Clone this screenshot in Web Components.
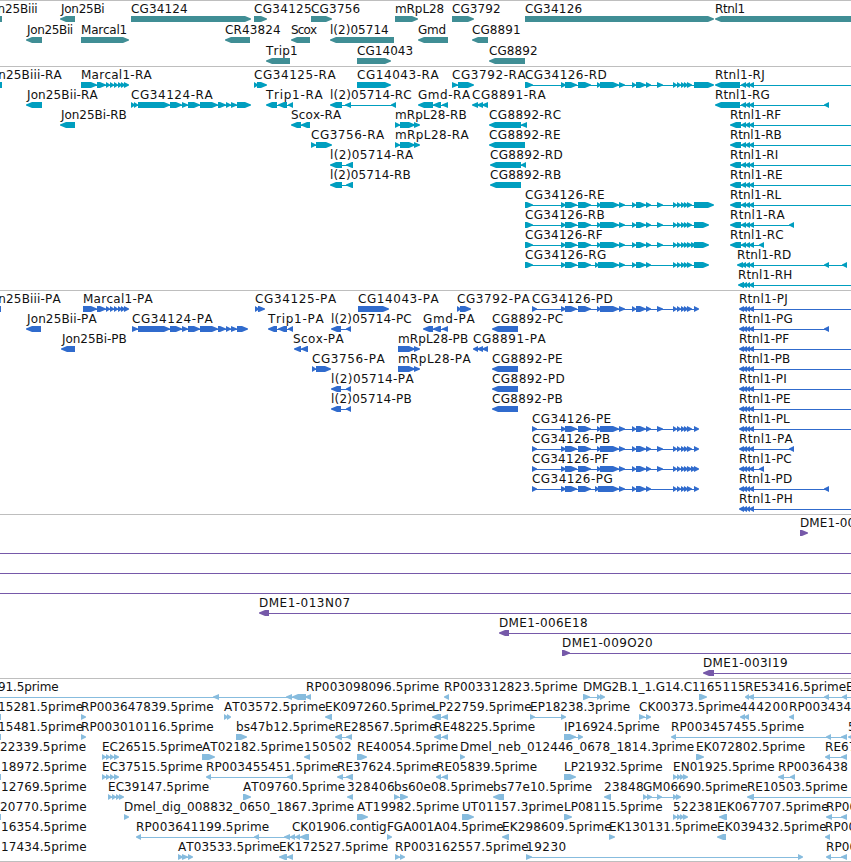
<!DOCTYPE html>
<html lang="en">
<head>
<meta charset="utf-8">
<title>Genome browser</title>
<style>
    body{
        margin: 0;
        background-color: white;
        overflow: hidden;
    }
</style>
</head>
<body>
<genome-browser>
    <genome-track name="genes" color="#408e95" pitch="21" rows="3" pad="2"></genome-track>
    <genome-track name="transcripts" color="#009ebf" pitch="20" rows="11" pad="3"></genome-track>
    <genome-track name="proteins" color="#306bcd" pitch="20" rows="11" pad="3"></genome-track>
    <genome-track name="clones" color="#7659a9" pitch="20" rows="8" pad="3"></genome-track>
    <genome-track name="ests" color="#87bcde" pitch="20" rows="9" pad="2"></genome-track>
</genome-browser>

<script>
// exon lists shared by several isoforms
const CG34124 = "138-170 170-182 182-188 188-200 200-218 218-226 226-231 231-237";
const CG34126 = "561-566 565-577 578-591 597-601 600-619 619-625 632-636 636-646 646-651 657-663 673-677 677-681 681-685 684-688 687-692";
const CG34126F = CG34126 + " 691-696";
const CG34126G = "561-566 565-577 578-591 595-599 598-619 619-625 632-636 636-646 646-651 673-677 677-681 681-685 684-688 687-692";
const MARCAL = "97-106 106-110 110-114 114-118 118-122 121-125 124-129";
const RT3 = "741-746 745-750 749-754";
const RT4 = "739-744 742-747 746-750 749-754";
const QUAD = "673-677 677-681 680-684 683-688";

// one line per feature: row | label | label left | label right | strand | exons | line
// an empty right edge means the label runs off the view
const DATA = {
genes: `
0|Jon25Biii|-13|37|-|-13-2
0|Jon25Bi|61|104|-|60-75
0|CG34124|131|187|+|131-251
0|CG34125|254|311|+|254-267
0|CG3756|311|359.5|+|311-332
0|mRpL28|395|443.5|+|395-418
0|CG3792|452|500|+|452-474
0|CG34126|525|581.5|+|525-714
0|Rtnl1|715|744.5|-|715-870
1|Jon25Bii|27|72.5|-|26-42
1|Marcal1|81|126.5|+|81-129
1|CR43824|225|280|-|225-250
1|Scox|291|316.5|-|291-310
1|l(2)05714|330|388|-|330-394
1|Gmd|418|445.5|-|418-448
1|CG8891|472|520|-|472-488
2|Trip1|266|297|-|266-290
2|CG14043|357|412.5|+|357-391
2|CG8892|489|537|-|489-525`,
transcripts: `
0|Jon25Biii-RA|-13|61|-|-13-2
0|Marcal1-RA|81|151|+|81-97 ${MARCAL}
0|CG34125-RA|254|335|+|254-258 257-267
0|CG14043-RA|357|438|+|357-391
0|CG3792-RA|452|525|+|452-458 458-474
0|CG34126-RD|525|606|+|525-533 ${CG34126} 694-714
0|Rtnl1-RJ|715|764|-|715-740 ${RT3}|860
1|Jon25Bii-RA|27|97|-|26-42
1|CG34124-RA|131|212|+|131-135 134-138 ${CG34124} 237-251
1|Trip1-RA|266|322|-|266-277 278-287 288-293
1|l(2)05714-RC|330|411|-|330-342 345-351 391-396
1|Gmd-RA|418|469.5|-|418-433 433-441 442-448
1|CG8891-RA|472|545|-|472-478 477-483 482-488
1|Rtnl1-RG|715|769|-|715-740 ${RT3} 824-829
2|Jon25Bi-RB|61|126|-|60-75
2|Scox-RA|291|340.5|-|291-301 301-310
2|mRpL28-RB|395|466|+|395-400 400-415 414-420
2|CG8892-RC|489|560.5|-|489-521 521-527
2|Rtnl1-RF|730|780.5|-|730-741 ${RT3}|860
3|CG3756-RA|311|383.5|+|311-316 316-332
3|mRpL28-RA|395|468|+|395-400 400-415 414-420
3|CG8892-RE|489|560|-|489-525
3|Rtnl1-RB|730|781|-|730-741 ${RT3}|860
4|l(2)05714-RA|330|412.5|-|330-342 346-353
4|CG8892-RD|490|562|-|490-521 521-526
4|Rtnl1-RI|730|777.5|-|730-741 ${RT3}|860
5|l(2)05714-RB|330|410|-|330-342 346-353
5|CG8892-RB|490|560.5|-|490-521
5|Rtnl1-RE|730|782|-|730-741 ${RT3}|860
6|CG34126-RE|525|604|+|525-533 ${CG34126} 694-714
6|Rtnl1-RL|730|780.5|-|730-741 ${RT3}|860
7|CG34126-RB|525|604|+|525-533 ${CG34126} 694-709
7|Rtnl1-RA|730|784|-|730-741 ${RT3} 789-794
8|CG34126-RF|525|602|+|525-533 ${CG34126F} 694-709
8|Rtnl1-RC|730|783|-|730-741 ${RT3} 759-764
9|CG34126-RG|525|605.5|+|525-533 ${CG34126G} 694-709
9|Rtnl1-RD|737|790.5|-|737-743 ${RT3} 824-829 842-847
10|Rtnl1-RH|738|791.5|-|738-744 ${RT4}|860`,
proteins: `
0|Jon25Biii-PA|-13|60|-|-13-1
0|Marcal1-PA|83|152|+|83-97 ${MARCAL}
0|CG34125-PA|255|335.5|+|255-259 258-265
0|CG14043-PA|358|438|+|358-389
0|CG3792-PA|457|529|+|457-461 460-471
0|CG34126-PD|532|612|+|532-537 ${CG34126} 694-699
0|Rtnl1-PJ|739|787|-|${RT4}|860
1|Jon25Bii-PA|27|96|-|26-41
1|CG34124-PA|132|212|+|132-138 ${CG34124} 237-248
1|Trip1-PA|268|323|-|268-277 278-287 288-293
1|l(2)05714-PC|331|411|-|331-341 346-351
1|Gmd-PA|423|474|-|423-433 433-441 442-448
1|CG8892-PC|492|562.5|-|492-518
1|Rtnl1-PG|739|792|-|${RT4} 824-829
2|Jon25Bi-PB|62|126|-|61-75
2|Scox-PA|293|343|-|294-301 301-308
2|mRpL28-PB|398|467.5|+|398-415 414-420
2|CG8891-PA|473|545|-|473-478 477-483 482-488
2|Rtnl1-PF|739|788.5|-|${RT4}|860
3|CG3756-PA|312|384|+|312-316 316-331
3|mRpL28-PA|398|470|+|398-415 414-420
3|CG8892-PE|492|562|-|492-518
3|Rtnl1-PB|739|789.5|-|${RT4}|860
4|l(2)05714-PA|331|413|-|331-341 346-351
4|CG8892-PD|492|564|-|492-518
4|Rtnl1-PI|739|786|-|${RT4}|860
5|l(2)05714-PB|331|411|-|331-341 346-351
5|CG8892-PB|492|562|-|492-518
5|Rtnl1-PE|739|790|-|${RT4}|860
6|CG34126-PE|532|610.5|+|532-537 ${CG34126} 694-699
6|Rtnl1-PL|739|789|-|${RT4}|860
7|CG34126-PB|532|609.5|+|532-537 ${CG34126} 694-699
7|Rtnl1-PA|739|792|-|${RT4} 789-794
8|CG34126-PF|532|608|+|532-537 ${CG34126F} 694-699
8|Rtnl1-PC|739|791|-|${RT4} 759-764
9|CG34126-PG|532|612|+|532-537 ${CG34126G} 694-699
9|Rtnl1-PD|739|791.5|-|${RT4} 824-829
10|Rtnl1-PH|739|792|-|${RT4}|860`,
clones: `
0|DME1-00|800||+|800-808
1||-10||+||860
2||-10||+||860
3||-10||+||860
4|DME1-013N07|259|349.5|-|259-269|860
5|DME1-006E18|499|587|-|499-509|860
6|DME1-009O20|562|652|+|562-570|860
7|DME1-003I19|703|787|-|703-714|860`,
ests: `
0|91.5prime|-2|58|-|-10--5 213-219 286-292 292-306 305-311
0|RP003098096.5prime|306|438.5|-|
0|RP003312823.5prime|444|577|-|444-449
0|DMG2B.1_1.G14.C1|583|699|+|583-590 597-601 600-605
0|165115|699|745|+|699-707
0|RE53416.5prime|745|845.5|-|745-749 748-754 824-829 842-847|860
0|E|846||-|
1|15281.5prime|-2|82.5|-|-8-1
1|RP003647839.5prime|81|213|+|81-86
1|AT03572.5prime|224|325|+|224-228 227-231
1|EK097260.5prime|325|433|-|325-332
1|LP22759.5prime|432|531|-|432-441 442-448
1|EP18238.3prime|530|629.5|+|530-535 561-566
1|CK00373.5prime|639|740|+|639-645 646-651
1|444200|740|787.5|-|740-745 744-749
1|RP0034348|789||-|789-794
2|15481.5prime|-2|82.5|-|-8-1
2|RP003010116.5prime|81|213|+|81-86
2|bs47b12.5prime|236|335|+|236-247
2|RE28567.5prime|335|436|-|335-342 346-352
2|RE48225.5prime|434|534.5|-|434-441 442-448
2|IP16924.5prime|564|659|+|564-576 578-583
2|RP003457455.5prime|671|803.5|-|671-676 826-831 841-847
2|5|848||-|848-870
3|22339.5prime|0|85.5|-|
3|EC26515.5prime|102|202|+|102-106 106-110 110-114 114-119
3|AT02182.5prime|202|303|+|202-215
3|150502|304|351|-|304-310
3|RE40054.5prime|357|457.5|+|357-367
3|Dmel_neb_012446_0678_1814.3prime|460|693.5|+|460-465
3|EK072802.5prime|696|804.5|+|696-704
3|RE67|825||-|825-830 841-847
4|18972.5prime|1|86|-|-8-1
4|EC37515.5prime|102|202|+|102-106 106-110 110-114 114-119
4|RP003455451.5prime|206|338|-|206-211 287-293
4|RE37624.5prime|337|438|-|337-343 346-353
4|RE05839.5prime|436|536.5|-|436-441 442-448
4|LP21932.5prime|564|662|+|564-576
4|EN01925.5prime|673|774|+|${QUAD}
4|RP0036438|778||-|778-784 790-795
5|12769.5prime|1|86|-|
5|EC39147.5prime|108|208.5|+|108-112 112-116 116-120 119-124
5|AT09760.5prime|243|344.5|+|243-251
5|328406|347|394|-|347-353
5|bs60e08.5prime|394|493|+|394-399 400-408
5|bs77e10.5prime|493|591.5|-|493-504
5|23848|604|643|-|604-611
5|GM06690.5prime|643|747|+|643-647 647-652 657-662 673-677 676-681
5|RE10503.5prime|747|847|-|747-754|860
6|20770.5prime|0|86|-|-8-1
6|Dmel_dig_008832_0650_1867.3prime|124|353.5|+|124-129
6|AT19982.5prime|357|458.5|+|357-368
6|UT01157.3prime|462|563|+|462-474
6|LP08115.5prime|564|662|+|564-572
6|522381|673|720|+|${QUAD}
6|EK067707.5prime|719|828|-|719-727
6|RP00|826||-|826-832 841-847
7|16354.5prime|1|86|-|
7|RP003641199.5prime|136|268.5|-|136-141 254-259 284-290 290-295 295-300 300-309
7|CK01906.contig|292|386|-|
7|FGA001A04.5prime|387|503|+|387-392
7|EK298609.5prime|502|611|-|502-509
7|EK130131.5prime|609|717|+|609-615
7|EK039432.5prime|717|826|-|717-726
7|RP00|825||-|825-830
8|17434.5prime|1|86|-|
8|AT03533.5prime|178|279|+|178-183 182-188 188-193
8|EK172527.5prime|279|387.5|-|279-287 287-293
8|RP003162557.5prime|395|528|+|395-400 400-405
8|19230|526|565.5|+|526-532 798-803
8|RP00|826||-|826-831 841-847`
};

class GenomeBrowser extends HTMLElement {
    constructor(){
        super();
        let shadowRoot = this.attachShadow({mode: 'open'});
        shadowRoot.innerHTML = `
            <style>
                :host{
                    display: flex;
                    flex-direction: column;
                    width: 851px;
                    height: 862px;
                    box-sizing: border-box;
                    border-bottom: 1px solid #bebebe;
                    overflow: hidden;
                    color: #111;
                    font-family: "DejaVu Sans", sans-serif;
                    font-size: 12px;
                }
            </style>
            <slot></slot>`;
    }
}

class GenomeTrack extends HTMLElement {
    constructor(){
        super();
        let shadowRoot = this.attachShadow({mode: 'open'});
        shadowRoot.innerHTML = `
            <style>
                :host{
                    display: flex;
                    flex-direction: column;
                    flex: none;
                    border-top: 1px solid #bebebe;
                }
            </style>`;
    }

    connectedCallback(){
        this.style.paddingBottom = this.getAttribute("pad") + "px";
        let rows = [];
        for(let i = 0; i < Number(this.getAttribute("rows")); i++){
            let row = document.createElement("track-row");
            row.style.height = this.getAttribute("pitch") + "px";
            row.style.setProperty("--feature-color", this.getAttribute("color"));
            this.shadowRoot.appendChild(row);
            rows.push(row);
        }

        for(let line of DATA[this.getAttribute("name")].trim().split("\n")){
            let [row, label, left, right, strand, exons, tail] = line.split("|");
            let feature = document.createElement("seq-feature");
            feature.textContent = label;
            feature.setAttribute("left", left);
            feature.setAttribute("right", right);
            feature.setAttribute("strand", strand);
            feature.setAttribute("exons", exons);
            if(tail) feature.setAttribute("tail", tail);
            rows[Number(row)].appendChild(feature);
        }
    }
}

class TrackRow extends HTMLElement {
    constructor(){
        super();
        let shadowRoot = this.attachShadow({mode: 'open'});
        shadowRoot.innerHTML = `
            <style>
                :host{
                    display: block;
                    position: relative;
                }
            </style>
            <slot></slot>`;
    }
}

class SeqFeature extends HTMLElement {
    constructor(){
        super();
        let shadowRoot = this.attachShadow({mode: 'open'});
        shadowRoot.innerHTML = `
            <style>
                :host{
                    position: absolute;
                    left: 0;
                    top: 0;
                }
                .label{
                    position: absolute;
                    top: -1px;
                    line-height: 18px;
                    white-space: nowrap;
                    font-kerning: none;
                    font-variant-ligatures: none;
                }
                svg{
                    position: absolute;
                    left: 0;
                    top: 15px;
                    fill: var(--feature-color);
                }
            </style>
            <span class='label'><slot></slot></span>
            <svg width='851' height='6'></svg>`;
    }

    connectedCallback(){
        this.fitLabel();
        this.drawExons();
    }

    // spread the letters so that the label ends at its right edge
    fitLabel(){
        let label = this.shadowRoot.querySelector(".label");
        let left = Number(this.getAttribute("left"));
        let right = this.getAttribute("right");
        let count = this.textContent.length;
        label.style.left = left + "px";
        if(right === ""){
            label.style.letterSpacing = "0.1px";
            return;
        }
        let natural = label.getBoundingClientRect().width;
        label.style.letterSpacing = (Number(right) + 0.7 - left - natural) / (count - 1) + "px";
    }

    drawExons(){
        let exons = [...this.getAttribute("exons").matchAll(/(-?\d+)-(-?\d+)/g)].map(m => [Number(m[1]), Number(m[2])]);
        let forward = this.getAttribute("strand") === "+";
        let tail = this.getAttribute("tail");
        let markup = "";

        if(exons.length > 1 || tail){
            let start = exons.length ? exons[0][0] + 2 : Number(this.getAttribute("left"));
            let end = tail ? Number(tail) : exons[exons.length - 1][1] - 2;
            markup += `<rect x='${start}' y='3' width='${end - start}' height='1'/>`;
        }
        for(let [a, b] of exons){
            let head = Math.min(6, b - a);
            if(forward){
                markup += `<path d='M${a} 0H${b - head}L${b} 2.5V3.5L${b - head} 6H${a}Z'/>`;
            } else {
                markup += `<path d='M${b} 0H${a + head}L${a} 2.5V3.5L${a + head} 6H${b}Z'/>`;
            }
        }
        this.shadowRoot.querySelector("svg").innerHTML = markup;
    }
}

// outermost first, so the font is in place when the labels are measured
customElements.define('genome-browser', GenomeBrowser);
customElements.define('track-row', TrackRow);
customElements.define('seq-feature', SeqFeature);
customElements.define('genome-track', GenomeTrack);
</script>
</body>
</html>
